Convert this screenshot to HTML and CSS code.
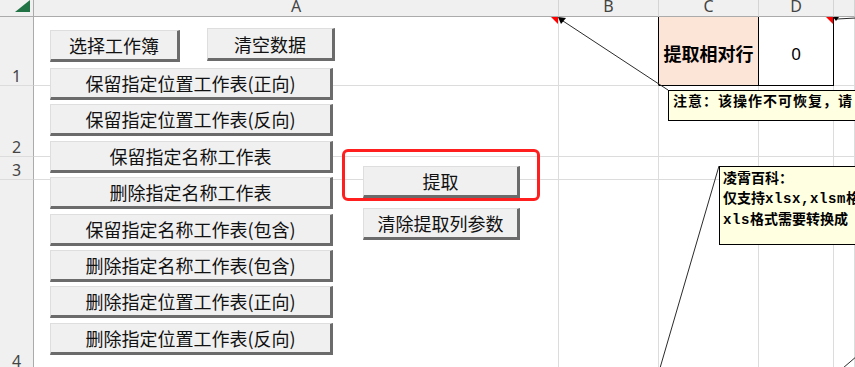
FILE: index.html
```html
<!DOCTYPE html>
<html lang="zh-CN">
<head>
  <meta charset="UTF-8" />
  <title>工作表提取</title>
  <link rel="stylesheet" href="styles.css">
</head>
<body>
  <div class="workbook">
    <!-- Cuadrícula de la hoja -->
    <div class="sheet">
      <div class="corner">
        <svg width="15" height="12" viewBox="0 0 15 12"><polygon points="0,12 15,12 15,0" fill="#217346"/></svg>
      </div>
      <div class="col-head">A</div>
      <div class="col-head">B</div>
      <div class="col-head">C</div>
      <div class="col-head">D</div>
      <div class="col-head"></div>

      <div class="row-head">1</div>
      <div class="cell has-note"></div>
      <div class="cell cell-edge"></div>
      <div class="cell cell-label">提取相对行</div>
      <div class="cell cell-value has-note">0</div>
      <div class="cell"></div>

      <div class="row-head">2</div>
      <div class="cell"></div>
      <div class="cell"></div>
      <div class="cell"></div>
      <div class="cell"></div>
      <div class="cell"></div>

      <div class="row-head">3</div>
      <div class="cell"></div>
      <div class="cell"></div>
      <div class="cell"></div>
      <div class="cell"></div>
      <div class="cell"></div>

      <div class="row-head">4</div>
      <div class="cell"></div>
      <div class="cell"></div>
      <div class="cell"></div>
      <div class="cell"></div>
      <div class="cell"></div>
    </div>

    <!-- Botones de la hoja -->
    <div class="panel-main">
      <div class="file-actions">
        <button class="btn btn-pick">选择工作簿</button>
        <button class="btn btn-clear">清空数据</button>
      </div>
      <div class="sheet-actions">
        <button class="btn">保留指定位置工作表(正向)</button>
        <button class="btn">保留指定位置工作表(反向)</button>
        <button class="btn">保留指定名称工作表</button>
        <button class="btn">删除指定名称工作表</button>
        <button class="btn">保留指定名称工作表(包含)</button>
        <button class="btn">删除指定名称工作表(包含)</button>
        <button class="btn">删除指定位置工作表(正向)</button>
        <button class="btn">删除指定位置工作表(反向)</button>
      </div>
    </div>

    <div class="panel-extract">
      <button class="btn">提取</button>
      <button class="btn">清除提取列参数</button>
    </div>

    <div class="highlight"></div>

    <!-- Líneas de los comentarios -->
    <svg class="callouts" width="855" height="367" viewBox="0 0 855 367">
      <line x1="563" y1="21" x2="668" y2="90" stroke="#2b2b2b" stroke-width="1"/>
      <polygon points="558,17 566,18 561,24" fill="#000"/>
      <line x1="837" y1="19" x2="856" y2="18" stroke="#2b2b2b" stroke-width="1"/>
      <polygon points="833,17 839,17 836,21" fill="#000"/>
      <line x1="719" y1="166" x2="660" y2="368" stroke="#2b2b2b" stroke-width="1"/>
      <line x1="843" y1="368" x2="857" y2="356" stroke="#2b2b2b" stroke-width="1"/>
    </svg>

    <div class="note note-warn">注意：该操作不可恢复，请</div>
    <div class="note note-info">
      <div>凌霄百科：</div>
      <div>仅支持<span class="mono">xlsx,xlsm</span>格式</div>
      <div><span class="mono">xls</span>格式需要转换成</div>
    </div>
  </div>
</body>
</html>
```

FILE: styles.css
```css
/* Reset */
* {
  margin: 0;
  padding: 0;
  box-sizing: border-box;
}
body {
  width: 855px;
  height: 367px;
  overflow: hidden;
  background: #fff;
  font-family: "Noto Sans", "Noto Sans CJK SC", sans-serif;
}
.workbook {
  position: relative;
  width: 855px;
  height: 367px;
  overflow: hidden;
}
/* Cuadrícula */
.sheet {
  display: grid;
  grid-template-columns: 34px 525px 100px 100px 75px 1fr;
  grid-template-rows: 17px 69px 71px 23px 191px;
}
.corner {
  background: #f0f0f0;
  border-right: 1px solid #ababab;
  border-bottom: 1px solid #ababab;
  display: flex;
  justify-content: flex-end;
  align-items: flex-end;
  padding: 0 3px 4px 0;
}
.corner svg {
  display: block;
}
.col-head {
  background: #f0f0f0;
  border-right: 1px solid #d4d4d4;
  border-bottom: 1px solid #ababab;
  text-align: center;
  font-size: 16px;
  line-height: 13px;
  color: #444;
}
.row-head {
  background: #f0f0f0;
  border-right: 1px solid #ababab;
  border-bottom: 1px solid #dcdcdc;
  display: flex;
  align-items: flex-end;
  justify-content: center;
  font-size: 16px;
  line-height: 1;
  padding-bottom: 1px;
  color: #444;
}
.cell {
  position: relative;
  border-right: 1px solid #dcdcdc;
  border-bottom: 1px solid #dcdcdc;
}
.cell-edge {
  border-right-color: #000;
}
.cell-label {
  background: #fce4d6;
  border-right-color: #000;
  border-bottom-color: #000;
  display: flex;
  align-items: center;
  justify-content: center;
  padding-top: 3px;
  font-family: "Noto Sans CJK SC", sans-serif;
  font-weight: 700;
  font-size: 18px;
  color: #000;
}
.cell-value {
  border-right-color: #000;
  border-bottom-color: #000;
  display: flex;
  align-items: center;
  justify-content: center;
  padding-top: 4px;
  font-size: 17px;
  color: #000;
}
/* Triángulo rojo de comentario */
.has-note::after {
  content: "";
  position: absolute;
  top: 0;
  right: 0;
  border-top: 7px solid #f00;
  border-left: 7px solid transparent;
}
/* Botones */
.btn {
  display: flex;
  align-items: center;
  justify-content: center;
  height: 32px;
  background: #f0f0f0;
  border-style: solid;
  border-width: 1px 3px 3px 1px;
  border-color: #dedede #6b6b6b #6b6b6b #dedede;
  font-family: "Noto Sans CJK SC", sans-serif;
  font-size: 18px;
  line-height: 1;
  color: #111;
  white-space: nowrap;
}
.panel-main {
  position: absolute;
  left: 50px;
  top: 28px;
  width: 285px;
  display: flex;
  flex-direction: column;
  gap: 6px;
}
.file-actions {
  display: flex;
  align-items: flex-start;
  gap: 27px;
}
.btn-pick {
  width: 130px;
  margin-top: 2px;
}
.btn-clear {
  width: 128px;
  height: 33px;
}
.sheet-actions {
  display: grid;
  grid-template-columns: 283px;
  grid-auto-rows: 32px;
  row-gap: 4.4px;
}
.panel-extract {
  position: absolute;
  left: 363px;
  top: 166px;
  width: 157px;
  display: flex;
  flex-direction: column;
  gap: 10px;
}
.highlight {
  position: absolute;
  left: 342px;
  top: 149px;
  width: 198px;
  height: 52px;
  border: 3px solid #ff1f1f;
  border-radius: 6px;
}
.callouts {
  position: absolute;
  left: 0;
  top: 0;
  pointer-events: none;
}
/* Comentarios */
.note {
  position: absolute;
  background: #ffffe1;
  border: 1px solid #000;
  font-family: "Noto Sans CJK SC", sans-serif;
  font-weight: 700;
  font-size: 14px;
  color: #000;
  white-space: nowrap;
}
.note-warn {
  left: 668px;
  top: 90px;
  width: 240px;
  height: 31px;
  padding: 0 4px;
  line-height: 19px;
  letter-spacing: 1px;
}
.note-info {
  left: 719px;
  top: 166px;
  width: 200px;
  height: 79px;
  padding: 1px 3px 0;
  line-height: 19.5px;
}
.mono {
  font-family: "Liberation Mono", monospace;
  letter-spacing: 0.6px;
}
```
